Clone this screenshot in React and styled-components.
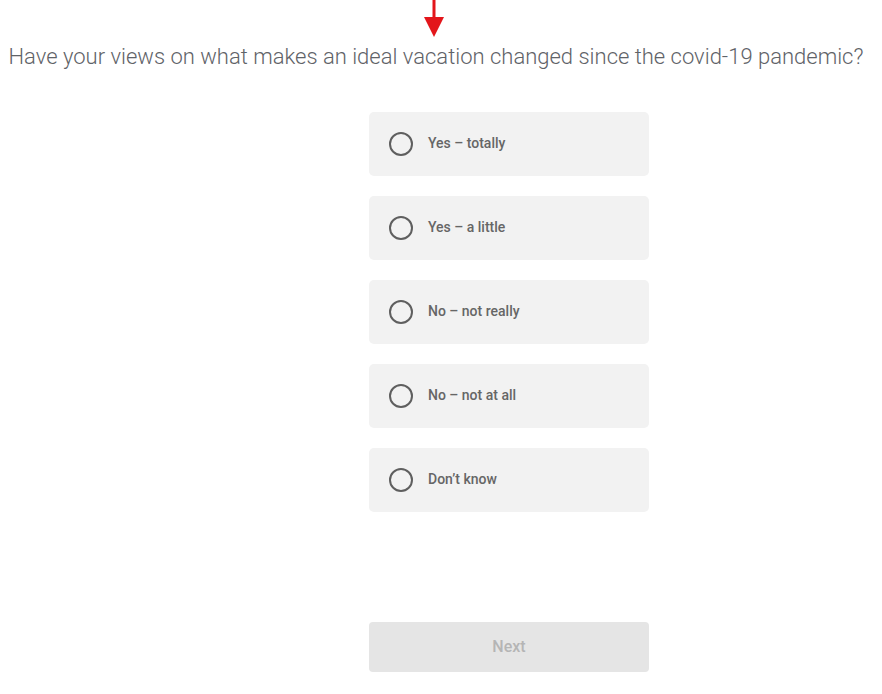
import React from "react";
import styled, { createGlobalStyle } from "styled-components";

const Global = createGlobalStyle`
  html, body { margin: 0; padding: 0; background: #fff; }
  body { font-family: Roboto, "Liberation Sans", sans-serif; }
`;

const Page = styled.div`
  width: 872px;
  display: flex;
  flex-direction: column;
  align-items: center;
`;

const ArrowWrap = styled.div`
  height: 38px;
  margin-right: 4px;
  display: flex;
`;

const Title = styled.h1`
  margin: 4px 0 0;
  font-weight: 300;
  font-size: 22px;
  line-height: 30px;
  color: #5f6368;
  text-align: center;
  white-space: nowrap;
`;

const Options = styled.div`
  align-self: flex-start;
  margin-left: 369px;
  margin-top: 40px;
  display: flex;
  flex-direction: column;
  gap: 20px;
  width: 280px;
`;

const Option = styled.label`
  height: 64px;
  box-sizing: border-box;
  background: #f2f2f2;
  border-radius: 5px;
  display: flex;
  align-items: center;
  padding-left: 20px;
  gap: 15px;
  cursor: pointer;
`;

const Radio = styled.span`
  width: 24px;
  height: 24px;
  box-sizing: border-box;
  border: 2px solid #5f5f5f;
  border-radius: 50%;
  flex: none;
`;

const OptionText = styled.span`
  font-size: 14px;
  font-weight: 500;
  color: #666;
  padding-bottom: 2px;
`;

const Next = styled.button`
  align-self: flex-start;
  margin-left: 369px;
  margin-top: 110px;
  width: 280px;
  height: 50px;
  padding: 0 0 2px;
  border: none;
  border-radius: 4px;
  background: #e5e5e5;
  color: #b5b5b5;
  font-family: Roboto, "Liberation Sans", sans-serif;
  font-size: 16px;
  font-weight: 500;
`;

const options = [
  "Yes – totally",
  "Yes – a little",
  "No – not really",
  "No – not at all",
  "Don’t know",
];

export default function App() {
  return (
    <>
      <Global />
      <Page>
        <ArrowWrap>
          <svg width="22" height="38" viewBox="0 0 22 38">
            <rect x="9.5" y="0" width="3" height="18" fill="#e3161b" />
            <polygon points="1,17 21,17 11,37" fill="#e3161b" />
          </svg>
        </ArrowWrap>
        <Title>Have your views on what makes an ideal vacation changed since the covid-19 pandemic?</Title>
        <Options>
          {options.map((o) => (
            <Option key={o}>
              <Radio />
              <OptionText>{o}</OptionText>
            </Option>
          ))}
        </Options>
        <Next>Next</Next>
      </Page>
    </>
  );
}
